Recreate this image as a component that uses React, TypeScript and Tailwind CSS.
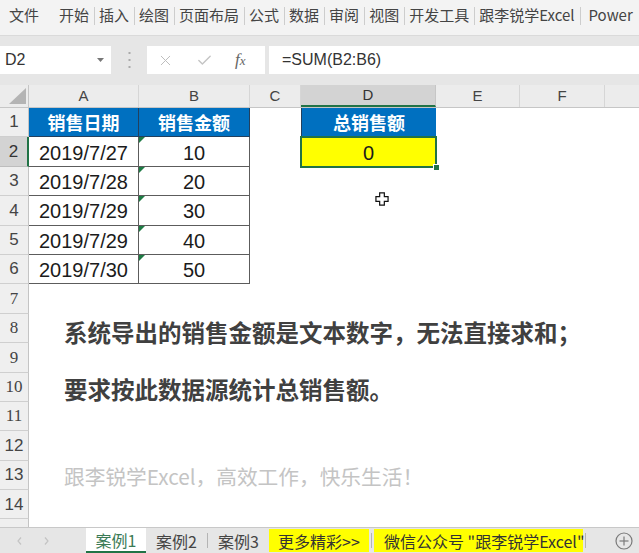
import { Check, X } from "lucide-react";

const MENU = ["开始", "插入", "绘图", "页面布局", "公式", "数据", "审阅", "视图", "开发工具", "跟李锐学Excel"];

const COL_W = ["w-[110px]", "w-[111px]", "w-[51px]", "w-[135px]", "w-[84px]", "w-[85px]", "w-[85px]"];
// G is only partly on screen, its letter falls outside the window
const COL_NAMES = ["A", "B", "C", "D", "E", "F", ""];

const DATA = [
  ["2019/7/27", "10"],
  ["2019/7/28", "20"],
  ["2019/7/29", "30"],
  ["2019/7/29", "40"],
  ["2019/7/30", "50"],
];

const ROWS = [1, 2, 3, 4, 5, 6, 7, 8, 9, 10, 11, 12, 13, 14, 15];

function TextTriangle() {
  return (
    <svg className="absolute left-0 top-0" width="6" height="6" viewBox="0 0 6 6">
      <polygon points="0,0 6,0 0,6" fill="#1e7b45" />
    </svg>
  );
}

function cell(n: number, c: number) {
  const w = COL_W[c];

  // header row of the two tables
  if (n === 1 && c < 2) {
    return (
      <div key={c} className={`${w} shrink-0 bg-[#0070c0] border-r border-b border-[#22405e] flex items-center justify-center text-white font-bold text-[18px]`}>
        {c === 0 ? "销售日期" : "销售金额"}
      </div>
    );
  }
  if (n === 1 && c === 3) {
    return (
      <div key={c} className={`${w} shrink-0 bg-[#0070c0] border-l border-[#22405e] flex items-center justify-center text-white font-bold text-[18px]`}>
        总销售额
      </div>
    );
  }

  // data
  if (n >= 2 && n <= 6 && c < 2) {
    const v = DATA[n - 2][c];
    return (
      <div key={c} className={`${w} shrink-0 relative bg-white border-r border-b border-[#5c5c5c] flex items-center justify-center pt-[2px] text-[20px] text-[#1b1b1b] font-['Liberation_Sans',sans-serif]`}>
        {c === 1 && <TextTriangle />}
        {v}
      </div>
    );
  }

  // selected result cell
  if (n === 2 && c === 3) {
    return (
      <div key={c} className={`${w} shrink-0 relative bg-[#ffff00] flex items-center justify-center pt-[2px] text-[20px] text-[#1b1b1b] font-['Liberation_Sans',sans-serif]`}>
        0
        <div className="absolute -left-px -top-px -right-px -bottom-px border-2 border-[#217346]" />
        <div className="absolute -right-[4px] -bottom-[4px] w-[7px] h-[7px] bg-[#217346] border border-white" />
      </div>
    );
  }

  // mouse pointer over the sheet
  if (n === 4 && c === 3) {
    return (
      <div key={c} className={`${w} shrink-0 relative`}>
        <svg className="absolute left-[74px] top-[-4px]" width="14" height="14" viewBox="-1 -1 15 15">
          <polygon points="4,0 9,0 9,4 13,4 13,9 9,9 9,13 4,13 4,9 0,9 0,4 4,4" fill="#fff" stroke="#111" strokeWidth="1.3" />
        </svg>
      </div>
    );
  }

  if (c === 0 && n === 8) {
    return (
      <div key={c} className={`${w} shrink-0 relative z-10 flex items-center pl-[35px] pt-[8px] whitespace-nowrap text-[23.5px] font-bold text-[#404040]`}>
        系统导出的销售金额是文本数字，无法直接求和；
      </div>
    );
  }
  if (c === 0 && n === 10) {
    return (
      <div key={c} className={`${w} shrink-0 relative z-10 flex items-center pl-[35px] pt-[4px] whitespace-nowrap text-[23.5px] font-bold text-[#404040]`}>
        要求按此数据源统计总销售额。
      </div>
    );
  }
  if (c === 0 && n === 13) {
    return (
      <div key={c} className={`${w} shrink-0 relative z-10 flex items-center pl-[35px] pt-[2px] whitespace-nowrap text-[20.7px] text-[#c4c4c4]`}>
        跟李锐学Excel，高效工作，快乐生活！
      </div>
    );
  }

  return <div key={c} className={`${w} shrink-0`} />;
}

function RowHead({ n }: { n: number }) {
  const serif = n >= 7 && n <= 11;
  if (n === 2) {
    return (
      <div className="w-[29px] shrink-0 bg-[#d3d3d3] border-r-2 border-b border-r-[#217346] border-b-[#bdbdbd] flex items-center justify-center text-[17px] text-[#333] font-['Liberation_Sans',sans-serif]">
        {n}
      </div>
    );
  }
  return (
    <div
      className={`w-[29px] shrink-0 bg-[#efefef] border-r border-b border-r-[#c4c4c4] border-b-[#cfcfcf] flex items-center justify-center text-[17px] text-[#444] ${
        serif ? "font-['Liberation_Serif',serif]" : "font-['Liberation_Sans',sans-serif]"
      }`}
    >
      {n < 15 ? n : null}
    </div>
  );
}

export default function App() {
  return (
    <div className="w-[639px] h-[553px] overflow-hidden flex flex-col bg-[#e6e6e6] font-['Noto_Sans_CJK_SC',sans-serif] text-[#444]">
      {/* ribbon tabs */}
      <div className="h-[36px] shrink-0 flex items-center pb-[4px] bg-[#f3f3f3] border-b border-[#dadada] text-[15px] whitespace-nowrap">
        <span className="ml-[9px] mr-[20px]">文件</span>
        {MENU.map((m) => (
          <div key={m} className="flex items-center">
            <span>{m}</span>
            <span className="ml-[5px] mr-[4px] w-px h-[18px] bg-[#cdcdcd]" />
          </div>
        ))}
        <span className="ml-[4px]">Power</span>
      </div>

      {/* formula bar */}
      <div className="mt-[10px] h-[28px] shrink-0 flex">
        <div className="w-[111px] shrink-0 bg-white flex items-center justify-between pl-[5px] pr-[7px] text-[16px] text-[#333]">
          <span className="font-['Liberation_Sans',sans-serif]">D2</span>
          <svg width="7" height="4" viewBox="0 0 7 4">
            <polygon points="0,0 7,0 3.5,4" fill="#777" />
          </svg>
        </div>
        <div className="w-[36px] shrink-0 flex items-center justify-center">
          <svg width="3" height="16" viewBox="0 0 3 16">
            <rect x="0.5" y="0" width="2" height="2" fill="#aaa" />
            <rect x="0.5" y="7" width="2" height="2" fill="#aaa" />
            <rect x="0.5" y="14" width="2" height="2" fill="#aaa" />
          </svg>
        </div>
        <div className="w-[118px] shrink-0 bg-white flex items-center pl-[10px] gap-[22px]">
          <X size={17} strokeWidth={1.4} color="#bdbdbd" />
          <Check size={17} strokeWidth={2} color="#c4c4c4" />
          <span className="italic text-[17px] text-[#666] font-['Liberation_Serif',serif]">
            f<span className="text-[13px]">x</span>
          </span>
        </div>
        <div className="ml-[4px] flex-1 bg-white flex items-center pl-[13px] text-[16px] text-[#333] font-['Liberation_Sans',sans-serif]">
          =SUM(B2:B6)
        </div>
      </div>

      {/* column headers */}
      <div className="mt-[11px] h-[23px] shrink-0 flex bg-[#ececec] border-b border-[#c6c6c6]">
        <div className="w-[29px] shrink-0 flex items-end justify-end pr-[2px] pb-[3px] border-r border-[#c6c6c6]">
          <svg width="17" height="16" viewBox="0 0 17 16">
            <polygon points="17,0 17,16 0,16" fill="#b4b4b4" />
          </svg>
        </div>
        {COL_NAMES.map((name, c) =>
          c === 3 ? (
            <div key={c} className={`${COL_W[c]} shrink-0 bg-[#d3d3d3] border-r border-b-2 border-r-[#c6c6c6] border-b-[#217346] flex items-center justify-center text-[15px] text-[#333] font-['Liberation_Sans',sans-serif]`}>
              {name}
            </div>
          ) : (
            <div key={c} className={`${COL_W[c]} shrink-0 border-r border-[#d6d6d6] flex items-center justify-center text-[15px] text-[#444] font-['Liberation_Sans',sans-serif]`}>
              {name}
            </div>
          )
        )}
      </div>

      {/* sheet */}
      <div className="flex-1 overflow-hidden flex flex-col bg-white">
        {ROWS.map((n) => (
          <div key={n} className="h-[29.4px] shrink-0 flex">
            <RowHead n={n} />
            {COL_W.map((_, c) => cell(n, c))}
          </div>
        ))}
      </div>

      {/* sheet tabs */}
      <div className="h-[26px] shrink-0 flex bg-[#e6e6e6] border-t border-[#c8c8c8] text-[16px] whitespace-nowrap">
        <div className="w-[86px] shrink-0 flex items-center pl-[17px] gap-[22px]">
          <svg width="5" height="8" viewBox="0 0 5 8">
            <polyline points="4,0.5 1,4 4,7.5" fill="none" stroke="#c4c4c4" strokeWidth="1.2" />
          </svg>
          <svg width="5" height="8" viewBox="0 0 5 8">
            <polyline points="1,0.5 4,4 1,7.5" fill="none" stroke="#c4c4c4" strokeWidth="1.2" />
          </svg>
        </div>
        <div className="w-[60px] shrink-0 bg-white border-b-2 border-[#217346] flex items-center justify-center text-[#3a7a55]">案例1</div>
        <div className="w-[61px] shrink-0 flex items-center justify-center">案例2</div>
        <div className="w-px shrink-0 my-[5px] bg-[#b4b4b4]" />
        <div className="w-[61px] shrink-0 flex items-center justify-center">案例3</div>
        <div className="w-[100px] shrink-0 my-[1px] bg-[#ffff00] flex items-center justify-center text-[#333]">更多精彩&gt;&gt;</div>
        <div className="w-px shrink-0 mx-[2px] my-[5px] bg-[#b4b4b4]" />
        <div className="w-[209px] shrink-0 my-[1px] bg-[#ffff00] flex items-center pl-[10px] text-[#333]">微信公众号 "跟李锐学Excel"</div>
        <div className="w-px shrink-0 ml-[2px] my-[5px] bg-[#b4b4b4]" />
        <div className="flex-1 flex items-center justify-end pr-[6px]">
          <svg width="18" height="18" viewBox="0 0 18 18">
            <circle cx="9" cy="9" r="8" fill="none" stroke="#7a7a7a" strokeWidth="1.2" />
            <line x1="9" y1="4.5" x2="9" y2="13.5" stroke="#7a7a7a" strokeWidth="1.2" />
            <line x1="4.5" y1="9" x2="13.5" y2="9" stroke="#7a7a7a" strokeWidth="1.2" />
          </svg>
        </div>
      </div>
    </div>
  );
}
